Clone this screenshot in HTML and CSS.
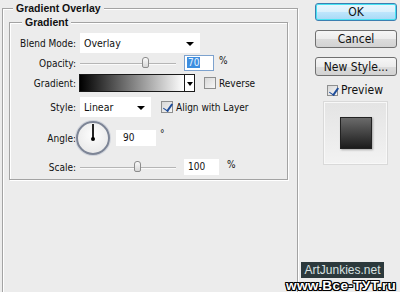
FILE: index.html
```html
<!DOCTYPE html>
<html>
<head>
    <meta name="viewport" content="width=device-width, initial-scale=1.0">
    <title>Gradient Overlay</title>
    <link rel="stylesheet" href="styles.css">
</head>
<body>
<div class="dialog">
    <div class="group outer">
        <div class="title">Gradient Overlay</div>
        <div class="group inner">
            <div class="title">Gradient</div>

            <div class="row blend-row">
                <span class="label">Blend Mode:</span>
                <div class="select blend">Overlay<span class="arrow"></span></div>
            </div>

            <div class="row">
                <span class="label">Opacity:</span>
                <div class="slider"><span class="thumb" style="left: 62px"></span></div>
                <div class="field focus"><span class="selected">70</span></div>
                <span class="unit">%</span>
            </div>

            <div class="row">
                <span class="label">Gradient:</span>
                <div class="gradient-pick">
                    <div class="ramp"></div>
                    <div class="drop"><span class="arrow"></span></div>
                </div>
                <label class="check reverse"><span class="box"></span>Reverse</label>
            </div>

            <div class="row style-row">
                <span class="label">Style:</span>
                <div class="select style">Linear<span class="arrow"></span></div>
                <label class="check align"><span class="box checked"></span>Align with Layer</label>
            </div>

            <div class="row angle-row">
                <span class="label">Angle:</span>
                <div class="dial"><span class="hand"></span><span class="dot"></span></div>
                <div class="field angle">90</div>
                <span class="unit deg">&deg;</span>
            </div>

            <div class="row scale-row">
                <span class="label">Scale:</span>
                <div class="slider"><span class="thumb" style="left: 54px"></span></div>
                <div class="field scale">100</div>
                <span class="unit">%</span>
            </div>
        </div>
    </div>

    <div class="side">
        <button class="btn default">OK</button>
        <button class="btn">Cancel</button>
        <button class="btn">New Style...</button>
        <label class="check preview-check"><span class="box checked"></span>Preview</label>
        <div class="preview"><div class="swatch"></div></div>
    </div>
</div>

<div class="mark-site">ArtJunkies.net</div>
<div class="mark-url">www.Все-ТУТ.ru</div>
</body>
</html>
```

FILE: styles.css
```css
* {
    margin: 0;
    padding: 0;
    box-sizing: border-box;
}
body {
    background: #ececec;
    font-family: 'DejaVu Sans Condensed', 'DejaVu Sans', sans-serif;
    font-size: 10px;
    color: #111;
    overflow: hidden;
    height: 292px;
    position: relative;
}
.dialog {
    display: flex;
    align-items: flex-start;
}

/* etched group boxes */
.group {
    border: 1px solid #a3a3a3;
    box-shadow: inset 1px 1px #fff, 1px 1px #fff;
}
.title {
    display: table;
    font-family: 'Liberation Sans', Arial, sans-serif;
    font-weight: bold;
    font-size: 10.5px;
    line-height: 13px;
    padding: 0 3px;
    margin-top: -7px;
    background: #ececec;
}
.outer {
    margin: 8px 0 0 2px;
    width: 296px;
    height: 300px;
    padding: 0 8px 0 6px;
}
.outer > .title {
    margin-left: 4px;
}
.inner {
    margin-top: 7px;
    width: 279px;
    height: 158px;
}
.inner > .title {
    margin-left: 12px;
}

.row {
    display: flex;
    align-items: center;
    height: 20px;
}
.blend-row {
    margin-top: 4px;
}
.label {
    width: 66px;
    text-align: right;
    margin-right: 4px;
}
.style-row {
    margin-top: 4px;
}
.angle-row {
    height: 34px;
    margin-top: 4px;
}
.scale-row {
    margin-top: 2px;
}

/* dropdowns */
.select {
    position: relative;
    background: #fff;
    height: 20px;
    line-height: 20px;
    padding-left: 4px;
    font-size: 10.5px;
}
.select.blend {
    width: 120px;
}
.select.style {
    width: 71px;
}
.arrow {
    position: absolute;
    right: 6px;
    top: 9px;
    border-left: 4px solid transparent;
    border-right: 4px solid transparent;
    border-top: 4px solid #000;
}

/* sliders */
.slider {
    position: relative;
    width: 96px;
    height: 12px;
    margin-right: 8px;
}
.slider::before {
    content: "";
    position: absolute;
    left: 0;
    right: 0;
    top: 6px;
    border-top: 1px solid #b5b5b5;
    border-bottom: 1px solid #fafafa;
}
.thumb {
    position: absolute;
    top: 0;
    width: 7px;
    height: 11px;
    border: 1px solid #8c8c8c;
    border-radius: 3px 3px 2px 2px;
    background: linear-gradient(#fafafa, #d7d7d7);
}

/* text fields */
.field {
    background: #fff;
    height: 16px;
    line-height: 16px;
    padding-left: 4px;
}
.field.focus {
    width: 30px;
    border: 1px solid #7da2ce;
    line-height: 14px;
    padding-left: 2px;
}
.selected {
    background: #3d8ee0;
    color: #eaf4ff;
    padding: 0 1px;
}
.unit {
    margin-left: 5px;
    align-self: flex-start;
    margin-top: 2px;
}
.field.angle {
    width: 40px;
    margin-left: 6px;
    padding-left: 7px;
}
.deg {
    margin-left: 4px;
    margin-top: 7px;
}
.field.scale {
    width: 35px;
    padding-left: 4px;
}
.scale-row .unit {
    margin-left: 8px;
}

/* gradient picker */
.gradient-pick {
    display: flex;
    height: 18px;
    width: 116px;
    border: 1px solid #1a1a1a;
    margin-left: -1px;
}
.ramp {
    flex: 1;
    background: linear-gradient(to right, #000, #fff);
    border-right: 1px solid #1a1a1a;
}
.drop {
    position: relative;
    width: 9px;
    background: #fff;
}
.drop .arrow {
    right: 1px;
    top: 7px;
    border-width: 3px;
    border-top-width: 4px;
}

/* checkboxes */
.check {
    display: flex;
    align-items: center;
}
.box {
    position: relative;
    width: 12px;
    height: 12px;
    border: 1px solid #8e8f8f;
    background: linear-gradient(135deg, #d8d8d8, #f6f6f6);
    margin-right: 3px;
}
.box.checked::after {
    content: "";
    position: absolute;
    left: 3px;
    top: 0;
    width: 4px;
    height: 8px;
    border-right: 2px solid #1f4d9a;
    border-bottom: 1px solid #1f4d9a;
    transform: rotate(35deg);
}
.reverse {
    margin-left: 9px;
}
.align {
    margin-left: 10px;
}

/* angle dial */
.dial {
    position: relative;
    width: 34px;
    height: 34px;
    margin-left: -4px;
    border: 2px solid #7d8596;
    border-radius: 50%;
    background: radial-gradient(circle at 50% 40%, #fdfdfd, #e4e4e4);
    box-shadow: 0 0 0 1px #d0d4dc;
}
.hand {
    position: absolute;
    left: 14px;
    top: 1px;
    width: 2px;
    height: 15px;
    background: #222;
}
.dot {
    position: absolute;
    left: 13px;
    top: 14px;
    width: 4px;
    height: 4px;
    border-radius: 50%;
    background: #000;
}

/* right column */
.side {
    margin-left: 17px;
    display: flex;
    flex-direction: column;
    align-items: flex-start;
    padding-top: 3px;
}
.btn {
    width: 82px;
    height: 18px;
    font-family: 'DejaVu Sans Condensed', 'DejaVu Sans', sans-serif;
    font-size: 12px;
    color: #111;
    border: 1px solid #707070;
    border-radius: 3px;
    background: linear-gradient(#f6f6f6 0%, #ececec 50%, #dcdcdc 51%, #d2d2d2 100%);
    margin-bottom: 9px;
}
.btn.default {
    border-color: #3c7fb1;
    box-shadow: inset 0 0 0 1px #48e3f2;
    background: linear-gradient(#eaf6fd 0%, #d9f0fc 50%, #bee6fd 51%, #a7d9f5 100%);
}
.btn:nth-child(3) {
    height: 19px;
    margin-bottom: 7px;
}
.preview-check {
    margin-left: 12px;
    font-size: 12px;
}
.preview-check .box {
    width: 11px;
    height: 11px;
}
.preview {
    margin: 5px 0 0 9px;
    width: 63px;
    height: 62px;
    background: linear-gradient(#e4e4e4, #f2f2f2);
    border: 1px solid #f8f8f8;
    box-shadow: 0 0 0 1px #d9d9d9;
    display: flex;
    align-items: center;
    justify-content: center;
}
.swatch {
    width: 32px;
    height: 32px;
    border: 1px solid #222;
    background: linear-gradient(#6a6a6a, #1c1c1c);
    box-shadow: 1px 1px 2px rgba(0, 0, 0, 0.3);
}

/* watermarks */
.mark-site {
    position: absolute;
    left: 301px;
    top: 262px;
    width: 83px;
    height: 16px;
    background: #2c393c;
    color: #d9e2e2;
    font-family: 'Liberation Sans', Arial, sans-serif;
    font-size: 12px;
    line-height: 16px;
    text-align: center;
}
.mark-url {
    position: absolute;
    left: 286px;
    top: 278px;
    white-space: nowrap;
    color: #fff;
    font-family: 'Liberation Sans', Arial, sans-serif;
    font-weight: bold;
    font-size: 13.5px;
    line-height: 15px;
    letter-spacing: 0.4px;
    text-shadow: 1px 0 #000, -1px 0 #000, 0 1px #000, 0 -1px #000, 1px 1px #000, -1px -1px #000, 1px -1px #000, -1px 1px #000;
}
```
